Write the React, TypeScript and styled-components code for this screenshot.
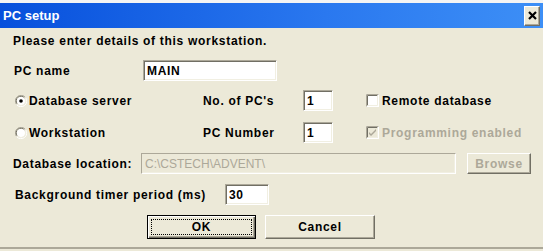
import React from 'react'
import styled, { createGlobalStyle, css } from 'styled-components'

const GlobalStyle = createGlobalStyle`
  html, body {
    margin: 0;
    padding: 0;
    background: #ece9d8;
  }
  body {
    font-family: "Liberation Sans", Arial, sans-serif;
  }
`

const Window = styled.div`
  width: 543px;
  height: 251px;
  box-sizing: border-box;
  display: flex;
  flex-direction: column;
  background: #ece9d8;
  border-top: 3px solid #f4f4f4;
  overflow: hidden;
`

const TitleBar = styled.div`
  height: 25px;
  flex: none;
  display: flex;
  align-items: center;
  justify-content: space-between;
  padding: 0 3px 0 3px;
  background: linear-gradient(to right, #0750dc, #2a78ef 60%, #3d8ff6);
  color: #fff;
  font-size: 13px;
  font-weight: bold;
`

const CloseButton = styled.div`
  width: 16px;
  height: 20px;
  box-sizing: border-box;
  display: flex;
  align-items: center;
  justify-content: center;
  background: #ece9d8;
  border: 1px solid;
  border-color: #fff #716f64 #716f64 #fff;
  box-shadow: inset -1px -1px 0 #aca899;
`

const Body = styled.div`
  height: 221px;
  flex: none;
  box-sizing: border-box;
  display: flex;
  flex-direction: column;
  padding-left: 13px;
  font-size: 12px;
  font-weight: bold;
  letter-spacing: 0.7px;
  color: #000;
  border-bottom: 2px solid #aca899;

  svg {
    flex: none;
  }
`

const Heading = styled.div`
  height: 26px;
  flex: none;
  display: flex;
  align-items: center;
`

const Row = styled.div<{ $height: number; $indent?: number }>`
  display: flex;
  align-items: center;
  flex: none;
  height: ${(p) => p.$height}px;
  padding-left: ${(p) => p.$indent ?? 0}px;
`

const Cell = styled.div<{ $width: number; $muted?: boolean; $gap?: number }>`
  width: ${(p) => p.$width}px;
  flex: none;
  display: flex;
  align-items: center;
  gap: ${(p) => p.$gap ?? 3}px;
  white-space: nowrap;
  color: ${(p) => (p.$muted ? '#aca899' : '#000')};
`

const Field = styled.div<{ $width: number; $disabled?: boolean }>`
  width: ${(p) => p.$width}px;
  height: 21px;
  flex: none;
  box-sizing: border-box;
  display: flex;
  align-items: center;
  padding-left: 3px;
  border: 1px solid;
  border-color: #aca899 #fff #fff #aca899;
  box-shadow: inset 1px 1px 0 #716f64, inset -1px -1px 0 #f1efe2;
  background: #fff;
  ${(p) =>
    p.$disabled &&
    css`
      background: #ece9d8;
      box-shadow: inset 1px 1px 0 #ece9d8, inset -1px -1px 0 #f1efe2;
      color: #aca899;
      font-weight: normal;
      letter-spacing: 0;
    `}
`

const Button = styled.div<{ $width: number; $height?: number; $disabled?: boolean; $default?: boolean }>`
  width: ${(p) => p.$width}px;
  height: ${(p) => p.$height ?? 24}px;
  flex: none;
  box-sizing: border-box;
  display: flex;
  align-items: center;
  justify-content: center;
  border: 1px solid;
  border-color: #fff #716f64 #716f64 #fff;
  box-shadow: inset -1px -1px 0 #aca899;
  color: ${(p) => (p.$disabled ? '#aca899' : '#000')};
  ${(p) =>
    p.$default &&
    css`
      border: 1px solid #000;
      box-shadow: inset 1px 1px 0 #fff, inset -1px -1px 0 #716f64, inset -2px -2px 0 #aca899;
      outline: 1px dotted #000;
      outline-offset: -5px;
    `}
`

const ButtonRow = styled.div`
  display: flex;
  gap: 9px;
  padding-left: 134px;
  margin-top: 2px;
`

function Radio({ checked }: { checked?: boolean }) {
  return (
    <svg width="12" height="12" viewBox="0 0 12 12">
      <path d="M10.5 2.5 A5.5 5.5 0 0 0 1.5 9.5" stroke="#aca899" fill="none" />
      <path d="M9.5 3 A4.5 4.5 0 0 0 2.2 8.8" stroke="#716f64" fill="none" />
      <circle cx="6" cy="6" r="4" fill="#fff" />
      <path d="M1.5 9.5 A5.5 5.5 0 0 0 10.5 2.5" stroke="#fff" fill="none" />
      <path d="M2.6 9.2 A4.5 4.5 0 0 0 9.4 2.6" stroke="#f1efe2" fill="none" />
      {checked && <circle cx="6" cy="6" r="1.8" fill="#000" />}
    </svg>
  )
}

function Checkbox({ checked, disabled }: { checked?: boolean; disabled?: boolean }) {
  return (
    <svg width="13" height="13" viewBox="0 0 13 13">
      <rect x="0" y="0" width="13" height="13" fill="#fff" />
      <path d="M0.5 12.5 V0.5 H12.5" stroke="#aca899" fill="none" />
      <path d="M1.5 11.5 V1.5 H11.5" stroke="#716f64" fill="none" />
      <rect x="2" y="2" width="10" height="10" fill={disabled ? '#ece9d8' : '#fff'} />
      <path d="M1.5 11.5 H11.5 V1.5" stroke="#f1efe2" fill="none" />
      {checked && (
        <path d="M3 6 L5 8 L10 3 V5 L5 10 L3 8 Z" fill={disabled ? '#aca899' : '#000'} />
      )}
    </svg>
  )
}

export default function App() {
  return (
    <>
      <GlobalStyle />
      <Window>
        <TitleBar>
          <span>PC setup</span>
          <CloseButton>
            <svg width="9" height="9" viewBox="0 0 9 9">
              <path d="M1 1 L8 8 M8 1 L1 8" stroke="#000" strokeWidth="2.2" />
            </svg>
          </CloseButton>
        </TitleBar>
        <Body>
          <Heading>Please enter details of this workstation.</Heading>
          <Row $height={33} $indent={1}>
            <Cell $width={129}>PC name</Cell>
            <Field $width={134}>MAIN</Field>
          </Row>
          <Row $height={27} $indent={2}>
            <Cell $width={188} $gap={2}>
              <Radio checked />
              Database server
            </Cell>
            <Cell $width={100}>No. of PC's</Cell>
            <Field $width={30}>1</Field>
            <Cell $width={160} style={{ marginLeft: 33 }}>
              <Checkbox />
              Remote database
            </Cell>
          </Row>
          <Row $height={37} $indent={2}>
            <Cell $width={188} $gap={2}>
              <Radio />
              Workstation
            </Cell>
            <Cell $width={100}>PC Number</Cell>
            <Field $width={30}>1</Field>
            <Cell $width={170} $muted style={{ marginLeft: 33 }}>
              <Checkbox checked disabled />
              Programming enabled
            </Cell>
          </Row>
          <Row $height={25}>
            <Cell $width={128}>Database location:</Cell>
            <Field $width={315} $disabled>
              C:\CSTECH\ADVENT\
            </Field>
            <Button $width={64} $height={21} $disabled style={{ marginLeft: 11 }}>
              Browse
            </Button>
          </Row>
          <Row $height={37} $indent={2}>
            <Cell $width={210}>Background timer period (ms)</Cell>
            <Field $width={44}>30</Field>
          </Row>
          <ButtonRow>
            <Button $width={109} $default>
              OK
            </Button>
            <Button $width={110}>Cancel</Button>
          </ButtonRow>
        </Body>
      </Window>
    </>
  )
}
